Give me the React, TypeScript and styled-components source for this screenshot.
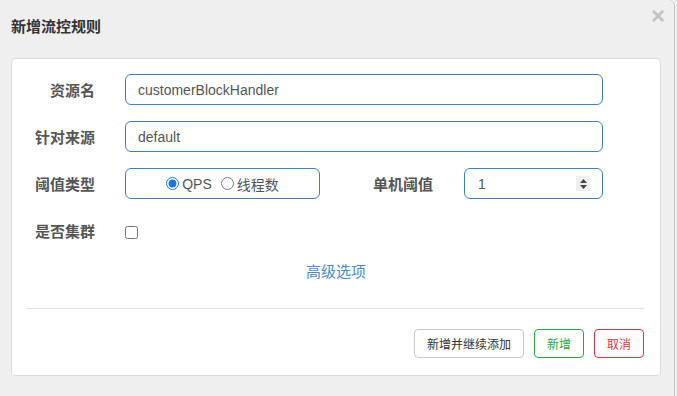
import React, { useState } from "react";
import styled, { createGlobalStyle } from "styled-components";

const GlobalStyle = createGlobalStyle`
  html, body {
    margin: 0;
    padding: 0;
    background: #efefef;
  }
  body {
    font-family: "Liberation Sans", "Noto Sans CJK SC", sans-serif;
    color: #555;
  }
`;

const App: React.FC = () => {
  const [grade, setGrade] = useState("qps");
  const [cluster, setCluster] = useState(false);

  return (
    <>
      <GlobalStyle />
      <Dialog>
        <Header>
          <Title>新增流控规则</Title>
          <Close>×</Close>
        </Header>
        <Card>
          <Row>
            <Label>资源名</Label>
            <TextBox>customerBlockHandler</TextBox>
          </Row>
          <Row>
            <Label>针对来源</Label>
            <TextBox>default</TextBox>
          </Row>
          <Row>
            <Label>阈值类型</Label>
            <RadioBox>
              <RadioItem>
                <Radio
                  type="radio"
                  checked={grade === "qps"}
                  onChange={() => setGrade("qps")}
                />
                QPS
              </RadioItem>
              <RadioItem>
                <Radio
                  type="radio"
                  checked={grade === "thread"}
                  onChange={() => setGrade("thread")}
                />
                线程数
              </RadioItem>
            </RadioBox>
            <SideLabel>单机阈值</SideLabel>
            <NumberBox>
              <span>1</span>
              <Spinner>
                <svg width="9" height="12" viewBox="0 0 9 12">
                  <path d="M4.5 1 L8 5 L1 5 Z" fill="#444" />
                  <path d="M4.5 11 L8 7 L1 7 Z" fill="#444" />
                </svg>
              </Spinner>
            </NumberBox>
          </Row>
          <Row>
            <Label>是否集群</Label>
            <CheckWrap>
              <Check
                type="checkbox"
                checked={cluster}
                onChange={() => setCluster(!cluster)}
              />
            </CheckWrap>
          </Row>
          <Advanced>
            <AdvancedLink>高级选项</AdvancedLink>
          </Advanced>
          <Divider />
          <Footer>
            <Button tone="default">新增并继续添加</Button>
            <Button tone="success">新增</Button>
            <Button tone="danger">取消</Button>
          </Footer>
        </Card>
      </Dialog>
    </>
  );
};

export default App;

const Dialog = styled.div`
  width: 675px;
  height: 396px;
  box-sizing: border-box;
  background: #efefef;
  border-right: 1px solid #c4c4c4;
  border-top-right-radius: 6px;
  padding: 0 10px 0 11px;
`;

const Header = styled.div`
  width: 654px;
  height: 58px;
  display: flex;
  align-items: flex-start;
  justify-content: space-between;
`;

const Title = styled.div`
  margin-top: 16px;
  font-family: "Noto Sans CJK SC", sans-serif;
  font-size: 15px;
  line-height: 20px;
  font-weight: bold;
  color: #333;
`;

const Close = styled.div`
  margin-top: 1px;
  font-family: "Liberation Sans", sans-serif;
  font-size: 24px;
  line-height: 30px;
  font-weight: bold;
  color: #c2c2c2;
`;

const Card = styled.div`
  width: 650px;
  box-sizing: border-box;
  background: #fff;
  border: 1px solid #dcdcdc;
  border-radius: 4px;
  padding: 15px 16px 17px 0;
`;

const Row = styled.div`
  display: flex;
  align-items: center;
  height: 31px;
  margin-bottom: 16px;
`;

const Label = styled.div`
  width: 83px;
  flex: none;
  text-align: right;
  margin-right: 30px;
  font-family: "Noto Sans CJK SC", sans-serif;
  font-size: 15px;
  font-weight: bold;
  color: #555;
`;

const SideLabel = styled(Label)`
  width: 113px;
  margin-right: 31px;
`;

const TextBox = styled.div`
  width: 478px;
  height: 31px;
  box-sizing: border-box;
  border: 1px solid #3f7fbf;
  border-radius: 6px;
  padding: 0 12px;
  display: flex;
  align-items: center;
  font-size: 14px;
  color: #555;
`;

const RadioBox = styled.div`
  width: 195px;
  height: 31px;
  box-sizing: border-box;
  border: 1px solid #3f7fbf;
  border-radius: 6px;
  display: flex;
  align-items: center;
  justify-content: center;
  gap: 9px;
  font-family: "Liberation Sans", "Noto Sans CJK SC", sans-serif;
  font-size: 14px;
  color: #555;
`;

const RadioItem = styled.label`
  display: flex;
  align-items: center;
  gap: 3px;
`;

const Radio = styled.input`
  margin: 0;
  width: 13px;
  height: 13px;
  accent-color: #1a73e8;
`;

const NumberBox = styled.div`
  width: 139px;
  height: 31px;
  box-sizing: border-box;
  border: 1px solid #3f7fbf;
  border-radius: 6px;
  padding: 0 12px 0 13px;
  display: flex;
  align-items: center;
  justify-content: space-between;
  font-size: 14px;
  color: #555;
`;

const Spinner = styled.div`
  width: 14px;
  height: 15px;
  background: #efefef;
  display: flex;
  align-items: center;
  justify-content: center;
`;

const CheckWrap = styled.div`
  display: flex;
  align-items: center;
  padding-top: 3px;
`;

const Check = styled.input`
  margin: 0;
  width: 13px;
  height: 13px;
`;

const Advanced = styled.div`
  margin-top: -1px;
  text-align: center;
  padding-left: 16px;
  height: 20px;
`;

const AdvancedLink = styled.a`
  font-family: "Noto Sans CJK SC", sans-serif;
  font-size: 15px;
  line-height: 20px;
  color: #4a8cca;
  cursor: pointer;
`;

const Divider = styled.div`
  height: 1px;
  background: #e2e2e2;
  margin: 27px 0 20px 15px;
`;

const toneColors: Record<string, string> = {
  default: "#c8c8c8",
  success: "#28a745",
  danger: "#dc3545",
};

const textColors: Record<string, string> = {
  default: "#333",
  success: "#28a745",
  danger: "#dc3545",
};

const Footer = styled.div`
  display: flex;
  justify-content: flex-end;
  gap: 10px;
`;

const Button = styled.button<{ tone: string }>`
  height: 29px;
  box-sizing: border-box;
  padding: 0 12px;
  background: #fff;
  border: 1px solid ${(p) => toneColors[p.tone]};
  border-radius: 4px;
  color: ${(p) => textColors[p.tone]};
  font-family: "Noto Sans CJK SC", sans-serif;
  font-size: 12px;
  cursor: pointer;
`;
